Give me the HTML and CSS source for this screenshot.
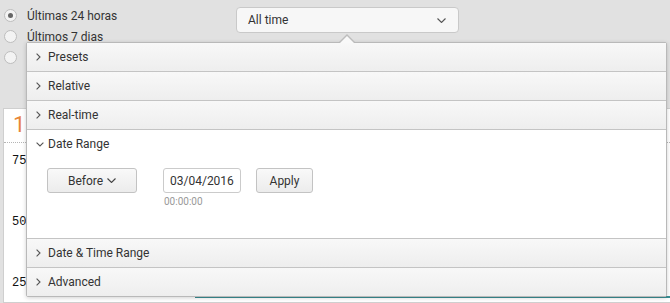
FILE: index.html
```html
<!DOCTYPE html>
<html lang="pt">
<head>
<meta charset="utf-8">
<title>Time range picker</title>
<link rel="stylesheet" href="styles.css">
</head>
<body>
<div class="page">
  <div class="top">
    <ul class="radios">
      <li><span class="radio checked"></span>Últimas 24 horas</li>
      <li><span class="radio"></span>Últimos 7 dias</li>
      <li><span class="radio"></span></li>
    </ul>
    <button class="picker"><span>All time</span>
      <svg class="caret" width="9" height="5" viewBox="0 0 9 5"><path d="M0.5 0.5 L4.5 4.5 L8.5 0.5" fill="none" stroke="#555" stroke-width="1.1"/></svg>
    </button>
  </div>

  <div class="panel">
    <div class="panel-title">1</div>
    <div class="axis">
      <div class="tick">75</div>
      <div class="tick">50</div>
      <div class="tick">25</div>
    </div>
    <div class="baseline"></div>
  </div>

  <div class="popup">
    <div class="acc-head">
      <span class="chev"><svg width="5" height="8" viewBox="0 0 5 8"><path d="M0.6 0.6 L4 4 L0.6 7.4" fill="none" stroke="#555" stroke-width="1.1"/></svg></span>
      Presets
    </div>
    <div class="acc-head">
      <span class="chev"><svg width="5" height="8" viewBox="0 0 5 8"><path d="M0.6 0.6 L4 4 L0.6 7.4" fill="none" stroke="#555" stroke-width="1.1"/></svg></span>
      Relative
    </div>
    <div class="acc-head">
      <span class="chev"><svg width="5" height="8" viewBox="0 0 5 8"><path d="M0.6 0.6 L4 4 L0.6 7.4" fill="none" stroke="#555" stroke-width="1.1"/></svg></span>
      Real-time
    </div>
    <div class="acc-head open">
      <span class="chev"><svg width="8" height="5" viewBox="0 0 8 5"><path d="M0.6 0.6 L4 4 L7.4 0.6" fill="none" stroke="#555" stroke-width="1.1"/></svg></span>
      Date Range
    </div>
    <div class="acc-body">
      <button class="btn before">Before
        <svg width="9" height="5" viewBox="0 0 9 5"><path d="M0.5 0.5 L4.5 4.5 L8.5 0.5" fill="none" stroke="#444" stroke-width="1.1"/></svg>
      </button>
      <div class="date-field">
        <input class="date-input" type="text" value="03/04/2016">
        <div class="time">00:00:00</div>
      </div>
      <button class="btn apply">Apply</button>
    </div>
    <div class="acc-head">
      <span class="chev"><svg width="5" height="8" viewBox="0 0 5 8"><path d="M0.6 0.6 L4 4 L0.6 7.4" fill="none" stroke="#555" stroke-width="1.1"/></svg></span>
      Date &amp; Time Range
    </div>
    <div class="acc-head last">
      <span class="chev"><svg width="5" height="8" viewBox="0 0 5 8"><path d="M0.6 0.6 L4 4 L0.6 7.4" fill="none" stroke="#555" stroke-width="1.1"/></svg></span>
      Advanced
    </div>
  </div>
</div>
</body>
</html>
```

FILE: styles.css
```css
* { box-sizing: border-box; }

body {
  margin: 0;
  background: #e1e1e1;
  font-family: Roboto, "Noto Sans", sans-serif;
  font-size: 12px;
  color: #333;
  overflow: hidden;
}

.page {
  position: relative;
  width: 670px;
  height: 303px;
  display: flex;
  flex-direction: column;
}

.top {
  display: flex;
  align-items: flex-start;
  flex-shrink: 0;
}

.radios {
  list-style: none;
  margin: 5px 0 0;
  padding: 0 0 0 4px;
  width: 236px;
}

.radios li {
  display: flex;
  align-items: center;
  gap: 10px;
  height: 21px;
  color: #333;
}

.radio {
  width: 13px;
  height: 13px;
  border-radius: 50%;
  border: 1px solid #bdbdbd;
  background: #f3f3f3;
  display: flex;
  align-items: center;
  justify-content: center;
}

.radio.checked::after {
  content: "";
  width: 5px;
  height: 5px;
  border-radius: 50%;
  background: #666;
}

.picker {
  margin-top: 7px;
  width: 223px;
  height: 26px;
  padding: 0 12px 0 11px;
  display: flex;
  align-items: center;
  justify-content: space-between;
  border: 1px solid #c9c9c9;
  border-radius: 4px;
  background: #f7f7f7;
  font-family: Roboto, "Noto Sans", sans-serif;
  font-size: 12px;
  color: #333;
}

.panel {
  margin: 40px 0 0 3px;
  height: 195px;
  flex-shrink: 0;
  background: #fff;
  border: 1px solid #cfcfcf;
  border-right: none;
  display: flex;
  flex-direction: column;
}

.panel-title {
  flex-shrink: 0;
  height: 34px;
  line-height: 31px;
  padding-left: 9px;
  font-size: 22px;
  color: #e8853a;
  border-bottom: 1px dotted #b5b5b5;
}

.axis {
  flex-shrink: 0;
  margin-top: 11px;
  padding-left: 8px;
}

.tick {
  height: 61px;
  line-height: 14px;
  font-family: "Liberation Mono", monospace;
  font-size: 12px;
  color: #111;
}

.tick:last-child {
  height: 14px;
}

.baseline {
  margin: auto 0 4px 191px;
  height: 2px;
  background: #3a8f94;
}

.popup {
  position: absolute;
  left: 26px;
  top: 42px;
  width: 641px;
  border: 1px solid #b9b9b9;
  border-radius: 2px;
  background: #fff;
  box-shadow: 0 1px 4px rgba(0, 0, 0, 0.18);
}

.popup::before {
  content: "";
  position: absolute;
  top: -9px;
  left: 312px;
  border-left: 8px solid transparent;
  border-right: 8px solid transparent;
  border-bottom: 8px solid #bdbdbd;
}

.popup::after {
  content: "";
  position: absolute;
  top: -7px;
  left: 313px;
  border-left: 7px solid transparent;
  border-right: 7px solid transparent;
  border-bottom: 7px solid #f9f9f9;
}

.acc-head {
  height: 29px;
  display: flex;
  align-items: center;
  gap: 4px;
  padding-left: 9px;
  background: linear-gradient(#f8f8f8, #eeeeee);
  border-bottom: 1px solid #c4c4c4;
  color: #333;
}

.acc-head.open {
  background: #fff;
  border-bottom: none;
  height: 28px;
}

.acc-head.last {
  border-bottom: none;
  height: 28px;
}

.chev {
  width: 8px;
  display: flex;
  align-items: center;
}

.acc-body {
  height: 81px;
  padding: 10px 0 0 20px;
  display: flex;
  align-items: flex-start;
  border-bottom: 1px solid #c4c4c4;
}

.btn {
  height: 25px;
  border: 1px solid #c3c3c3;
  border-radius: 3px;
  background: linear-gradient(#f9f9f9, #ececec);
  font-family: Roboto, "Noto Sans", sans-serif;
  font-size: 12px;
  color: #333;
  display: flex;
  align-items: center;
  justify-content: center;
  gap: 4px;
  padding: 0;
}

.before {
  width: 90px;
  margin-right: 26px;
}

.date-field {
  display: flex;
  flex-direction: column;
  margin-right: 15px;
}

.date-input {
  width: 78px;
  height: 25px;
  border: 1px solid #cbcbcb;
  border-radius: 3px;
  background: #fff;
  padding: 0 0 0 6px;
  font-family: Roboto, "Noto Sans", sans-serif;
  font-size: 12px;
  color: #333;
}

.time {
  margin-top: 3px;
  padding-left: 1px;
  font-size: 10px;
  color: #999;
}

.apply {
  width: 57px;
}
```
